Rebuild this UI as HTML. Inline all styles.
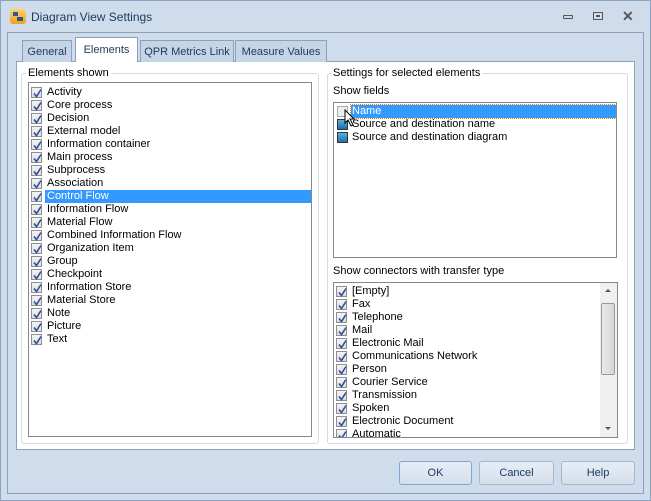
<!DOCTYPE html>
<html><head><style>
*{box-sizing:border-box;margin:0;padding:0}
body{width:651px;height:501px;background:#cfdcec;font-family:"Liberation Sans",sans-serif;font-size:11px;color:#000;position:relative;overflow:hidden}
.abs{position:absolute}
.win{left:0;top:0;width:651px;height:501px;border:1px solid #8da2bf}
.title{left:31px;top:10px;font-size:12px;color:#1e395b}
.frame{left:7px;top:32px;width:637px;height:462px;border:1px solid #8aa0bc;background:#cfdcec}
.page{left:16px;top:61px;width:619px;height:389px;background:#fff;border:1px solid #8aa0bc}
.tab{top:40px;height:22px;background:#c5d4e6;border:1px solid #8aa0bc;border-bottom:none;text-align:center;line-height:22px;color:#1e395b;font-size:11px}
.tab.sel{top:37px;height:25px;background:#fff;line-height:25px;z-index:2}
.grp{border:1px solid #d5dbe2;border-radius:3px}
.glabel{background:#fff;padding:0 2px}
.list{border:1px solid #828790;background:#fff;overflow:hidden}
.row{height:13px;line-height:13px;position:relative;padding-left:18px;white-space:nowrap}
.cb{position:absolute;left:2px;top:1px;width:11px;height:11px;border:1px solid #8f8f8f;background:linear-gradient(#f4f4f4,#dcdcdc)}
.cb svg{position:absolute;left:0;top:0}
.btn{top:461px;height:24px;border:1px solid #a7b6c9;border-radius:3px;background:linear-gradient(#e6edf6,#d4dfec);text-align:center;line-height:22px;color:#1e395b;font-size:11px}
</style></head><body>
<div class="abs win"></div>
<div class="abs" style="left:10px;top:9px;width:16px;height:15px;border-radius:3px;background:linear-gradient(#ffd36a,#f0a020)"><div class="abs" style="left:3px;top:3px;width:5px;height:4px;background:#2a5a8a"></div><div class="abs" style="left:7px;top:8px;width:6px;height:4px;background:#2a5a8a"></div></div>
<div class="abs title">Diagram View Settings</div>
<div class="abs" style="left:563px;top:15px;width:10px;height:4px;border:1px solid #555;border-radius:1px"></div>
<div class="abs" style="left:593px;top:12px;width:10px;height:8px;border:1px solid #555"><div class="abs" style="left:2px;top:2px;width:4px;height:2px;border:1px solid #555"></div></div>
<div class="abs" style="left:622px;top:8px;font-size:14px;color:#555;font-weight:bold">✕</div>
<div class="abs frame"></div>
<div class="abs page"></div>
<div class="abs tab" style="left:22px;width:50px">General</div>
<div class="abs tab sel" style="left:75px;width:63px">Elements</div>
<div class="abs tab" style="left:140px;width:94px">QPR Metrics Link</div>
<div class="abs tab" style="left:235px;width:92px">Measure Values</div>

<div class="abs grp" style="left:21px;top:73px;width:298px;height:371px"></div>
<div class="abs glabel" style="left:26px;top:67px">Elements shown</div>
<div class="abs list" style="left:28px;top:82px;width:284px;height:355px;padding-top:3px">
<div id="L"></div>
</div>

<div class="abs grp" style="left:327px;top:73px;width:301px;height:371px"></div>
<div class="abs glabel" style="left:331px;top:67px">Settings for selected elements</div>
<div class="abs" style="left:333px;top:85px">Show fields</div>
<div class="abs list" style="left:333px;top:102px;width:284px;height:156px;padding-top:2px">
<div class="row" style="margin-left:17px;padding-left:1px;background:#3399ff;color:#fff;outline:1px dotted #e08000;width:265px">Name</div>
<div class="row">Source and destination name</div>
<div class="row">Source and destination diagram</div>
<div class="abs" style="left:3px;top:3px;width:11px;height:11px;border:1px solid #aaa;background:#eee"></div>
<div class="abs" style="left:3px;top:16px;width:11px;height:11px;border:1px solid #333;background:linear-gradient(#5ab0e0,#1a70a8)"></div>
<div class="abs" style="left:3px;top:29px;width:11px;height:11px;border:1px solid #333;background:linear-gradient(#5ab0e0,#1a70a8)"></div>
<svg class="abs" style="left:10px;top:6px" width="12" height="18"><path d="M1 1 L1 14 L4 11 L7 17 L9 16 L6 10 L10 10 Z" fill="#fff" stroke="#000" stroke-width="1"/></svg>
</div>
<div class="abs" style="left:333px;top:265px">Show connectors with transfer type</div>
<div class="abs list" style="left:333px;top:282px;width:285px;height:156px;padding-top:2px">
<div id="R"></div>
<div class="abs" style="right:0;top:0;width:17px;height:154px;background:#f0f0f0"><div class="abs" style="left:5px;top:6px;border:3px solid transparent;border-bottom:3px solid #555;border-top:none;width:0"></div><div class="abs" style="left:1px;top:20px;width:14px;height:72px;border:1px solid #9a9a9a;border-radius:2px;background:linear-gradient(90deg,#eaeaea,#d6d6d6)"></div><div class="abs" style="left:5px;top:144px;border:3px solid transparent;border-top:3px solid #555;border-bottom:none;width:0"></div></div>
</div>

<div class="abs btn" style="left:399px;width:73px;border-color:#7fa6d4">OK</div>
<div class="abs btn" style="left:479px;width:75px">Cancel</div>
<div class="abs btn" style="left:561px;width:74px">Help</div>
<script>
var ck='<span class="cb"><svg width="11" height="11"><path d="M2 5.5 L4.5 8.5 L9 1.5" fill="none" stroke="#2d4fa0" stroke-width="1.6"/></svg></span>';
var L=["Activity","Core process","Decision","External model","Information container","Main process","Subprocess","Association","Control Flow","Information Flow","Material Flow","Combined Information Flow","Organization Item","Group","Checkpoint","Information Store","Material Store","Note","Picture","Text"];
document.getElementById('L').innerHTML=L.map(function(t){return t=="Control Flow"?'<div class="row">'+ck+'<span style="position:absolute;left:16px;top:0;width:266px;height:13px;background:#3399ff;color:#fff;padding-left:2px">'+t+'</span></div>':'<div class="row">'+ck+t+'</div>'}).join('');
var R=["[Empty]","Fax","Telephone","Mail","Electronic Mail","Communications Network","Person","Courier Service","Transmission","Spoken","Electronic Document","Automatic"];
document.getElementById('R').innerHTML=R.map(function(t){return '<div class="row">'+ck+t+'</div>'}).join('');
</script>
</body></html>
